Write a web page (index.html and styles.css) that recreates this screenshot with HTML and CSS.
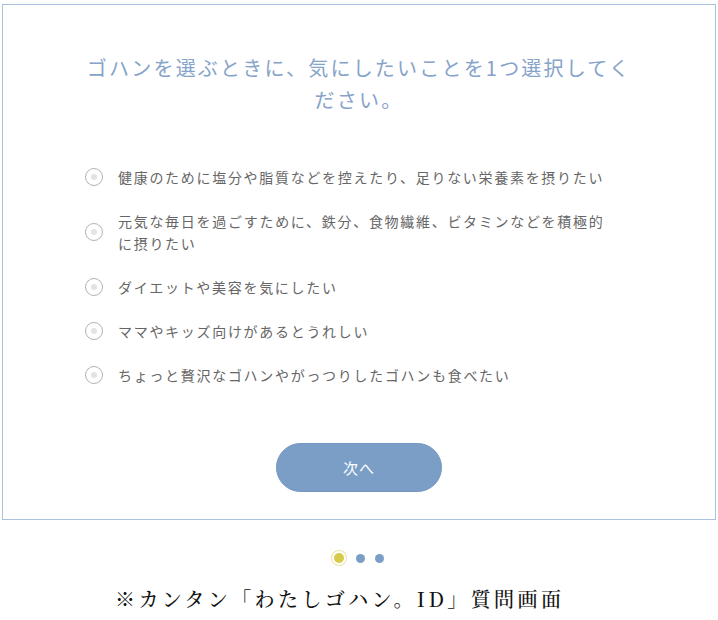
FILE: index.html
```html
<!DOCTYPE html>
<html lang="ja">
<head>
  <meta charset="UTF-8">
  <meta name="viewport" content="width=device-width, initial-scale=1.0">
  <title>わたしゴハン。ID 質問画面</title>
  <link rel="stylesheet" href="styles.css">
</head>
<body>
  <div class="card">
    <h1 class="question">ゴハンを選ぶときに、気にしたいことを1つ選択してください。</h1>

    <ul class="options">
      <li class="option"><span class="radio"></span><span class="label">健康のために塩分や脂質などを控えたり、足りない栄養素を摂りたい</span></li>
      <li class="option"><span class="radio"></span><span class="label">元気な毎日を過ごすために、鉄分、食物繊維、ビタミンなどを積極的に摂りたい</span></li>
      <li class="option"><span class="radio"></span><span class="label">ダイエットや美容を気にしたい</span></li>
      <li class="option"><span class="radio"></span><span class="label">ママやキッズ向けがあるとうれしい</span></li>
      <li class="option"><span class="radio"></span><span class="label">ちょっと贅沢なゴハンやがっつりしたゴハンも食べたい</span></li>
    </ul>

    <div class="actions">
      <button class="next">次へ</button>
    </div>
  </div>

  <div class="dots">
    <span class="dot active"></span>
    <span class="dot"></span>
    <span class="dot"></span>
  </div>

  <p class="caption">※カンタン「わたしゴハン。ID」質問画面</p>
</body>
</html>
```

FILE: styles.css
```css
body {
  margin: 0;
  background: #fff;
  font-family: "Noto Sans CJK JP", "Noto Sans", sans-serif;
}

.card {
  margin: 4px 2px 0 2px;
  width: 712px;
  border: 1px solid #a9c1dd;
  padding: 47px 0 27px;
}

.question {
  max-width: 560px;
  margin: 0 auto;
  font-size: 20px;
  font-weight: 400;
  line-height: 32px;
  letter-spacing: 2.2px;
  color: #86a3c9;
  text-align: center;
}

.options {
  list-style: none;
  margin: 50px 0 0;
  padding: 0 0 0 82px;
  display: flex;
  flex-direction: column;
  gap: 22px;
}

.option {
  display: flex;
  align-items: center;
  gap: 15px;
}

.radio {
  flex: none;
  width: 16px;
  height: 16px;
  border: 1px solid #b3b3b3;
  border-radius: 50%;
  display: flex;
  align-items: center;
  justify-content: center;
}

.radio::after {
  content: "";
  width: 6px;
  height: 6px;
  border-radius: 50%;
  background: #e3e3e3;
}

.label {
  max-width: 496px;
  font-size: 14px;
  line-height: 22px;
  letter-spacing: 1.7px;
  color: #666;
}

.actions {
  margin-top: 57px;
  display: flex;
  justify-content: center;
}

.next {
  width: 166px;
  height: 49px;
  border: 1px solid #7396c0;
  border-radius: 25px;
  background: #7b9ec6;
  color: #fff;
  font-family: inherit;
  font-size: 15px;
  letter-spacing: 1px;
  cursor: pointer;
}

.dots {
  margin-top: 30px;
  display: flex;
  justify-content: center;
  align-items: center;
  gap: 10px;
  height: 16px;
}

.dot {
  width: 9px;
  height: 9px;
  border-radius: 50%;
  background: #7b9ec6;
}

.dot.active {
  width: 10px;
  height: 10px;
  background: #d8ca4a;
  box-shadow: 0 0 0 2px #fff, 0 0 0 3px #ece4a6;
  margin-right: 2px;
}

.caption {
  margin: 18px 0 0;
  padding-left: 115px;
  font-family: "Noto Serif CJK JP", "Noto Sans CJK JP", serif;
  font-size: 20px;
  font-weight: 500;
  line-height: 30px;
  letter-spacing: 3.4px;
  color: #111;
}
```
